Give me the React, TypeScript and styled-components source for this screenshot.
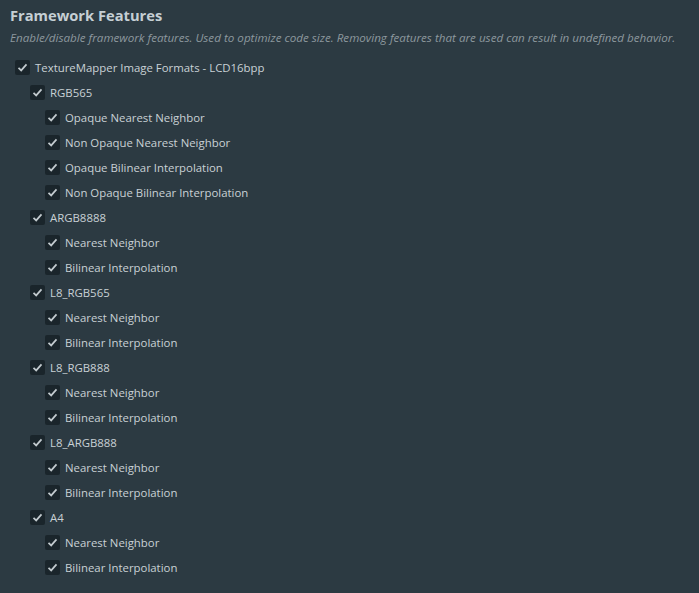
import React from "react";
import styled, { createGlobalStyle } from "styled-components";

const GlobalStyle = createGlobalStyle`
    html, body {
        margin: 0;
        padding: 0;
        background: #2c3a42;
    }
    body {
        font-family: "Open Sans", "Noto Sans", sans-serif;
    }
`;

const DivRoot = styled.div`
    width: 699px;
    height: 593px;
    box-sizing: border-box;
    padding: 5px 10px 0 10px;
    background: #2c3a42;
    color: #c9d1d5;
    overflow: hidden;
`;

const Title = styled.div`
    font-size: 14.7px;
    font-weight: 700;
    color: #c6cfd4;
    line-height: 20px;
`;

const Description = styled.div`
    font-size: 11.65px;
    font-style: italic;
    color: #8d989e;
    line-height: 16px;
    margin-top: 5px;
    white-space: nowrap;
`;

const List = styled.div`
    display: flex;
    flex-direction: column;
    margin-top: 9px;
`;

const Row = styled.label<{ $level: number }>`
    display: flex;
    align-items: center;
    height: 25px;
    padding-left: ${p => 5 + p.$level * 15}px;
    gap: 5px;
    font-size: 11.4px;
    cursor: pointer;
`;

const Box = styled.span`
    width: 15px;
    height: 15px;
    border-radius: 2px;
    background: #1a252b;
    display: flex;
    align-items: center;
    justify-content: center;
    flex-shrink: 0;
`;

interface Feature {
    label: string;
    level: number;
}

const formats = ["ARGB8888", "L8_RGB565", "L8_RGB888", "L8_ARGB888", "A4"];

const features: Array<Feature> = [
    { label: "TextureMapper Image Formats - LCD16bpp", level: 0 },
    { label: "RGB565", level: 1 },
    { label: "Opaque Nearest Neighbor", level: 2 },
    { label: "Non Opaque Nearest Neighbor", level: 2 },
    { label: "Opaque Bilinear Interpolation", level: 2 },
    { label: "Non Opaque Bilinear Interpolation", level: 2 },
    ...formats.flatMap(f => [
        { label: f, level: 1 },
        { label: "Nearest Neighbor", level: 2 },
        { label: "Bilinear Interpolation", level: 2 },
    ]),
];

const Check = () => (
    <svg width="11" height="11" viewBox="0 0 11 11">
        <path d="M1.5 5.8 L4.2 8.4 L9.5 2.4" fill="none" stroke="#c3cbcf" strokeWidth="1.7" />
    </svg>
);

const App = () => {
    return (
        <DivRoot>
            <GlobalStyle />
            <Title>Framework Features</Title>
            <Description>
                Enable/disable framework features. Used to optimize code size. Removing features that are used can result in undefined behavior.
            </Description>
            <List>
                {features.map((item, i) => (
                    <Row key={i} $level={item.level}>
                        <Box><Check /></Box>
                        {item.label}
                    </Row>
                ))}
            </List>
        </DivRoot>
    );
};

export default App;
